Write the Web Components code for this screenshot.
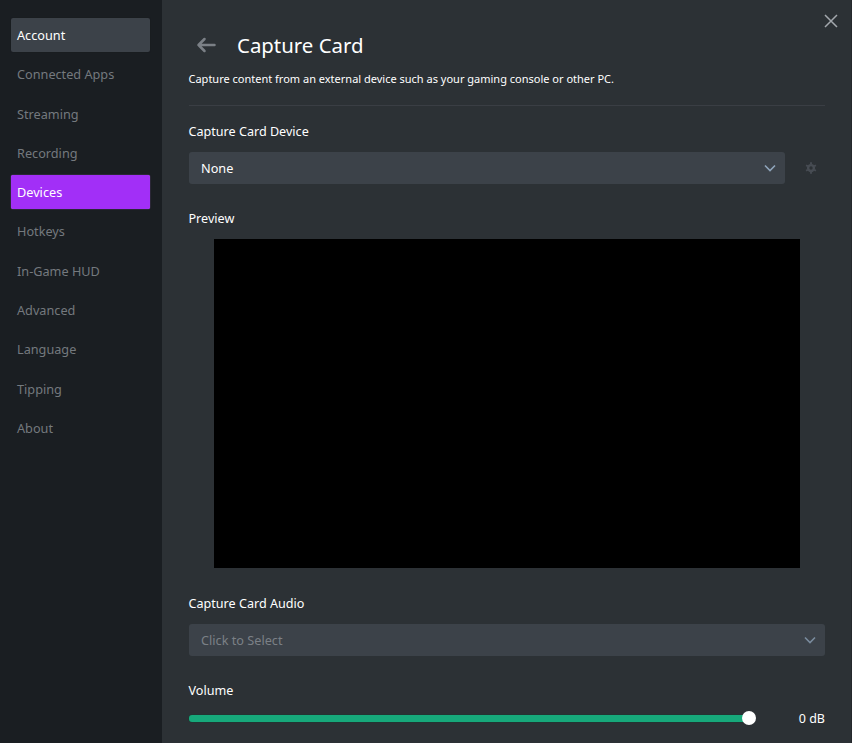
<!DOCTYPE html>
<html>
<head>
<meta charset="utf-8">
<style>
  html, body { margin: 0; height: 100%; background: #2c3135; overflow: hidden; }
  body { font-family: "Noto Sans", "Open Sans", sans-serif; color: #fff; }
</style>
</head>
<body>
<settings-window>
  <nav-item slot="nav" active>Account</nav-item>
  <nav-item slot="nav">Connected Apps</nav-item>
  <nav-item slot="nav">Streaming</nav-item>
  <nav-item slot="nav">Recording</nav-item>
  <nav-item slot="nav" selected>Devices</nav-item>
  <nav-item slot="nav">Hotkeys</nav-item>
  <nav-item slot="nav">In-Game HUD</nav-item>
  <nav-item slot="nav">Advanced</nav-item>
  <nav-item slot="nav">Language</nav-item>
  <nav-item slot="nav">Tipping</nav-item>
  <nav-item slot="nav">About</nav-item>

  <page-header>Capture Card<span slot="desc">Capture content from an external device such as your gaming console or other PC.</span></page-header>

  <field-label style="margin-top:16px">Capture Card Device</field-label>
  <div style="display:flex;align-items:center;margin-top:10px">
    <select-box style="width:596.5px">None</select-box>
    <gear-icon></gear-icon>
  </div>

  <field-label style="margin-top:25px">Preview</field-label>
  <preview-box></preview-box>

  <field-label style="margin-top:26px">Capture Card Audio</field-label>
  <select-box placeholder style="margin-top:10px">Click to Select</select-box>

  <field-label style="margin-top:25px">Volume</field-label>
  <volume-slider value="0 dB"></volume-slider>
</settings-window>

<script>
  class SettingsWindow extends HTMLElement {
    constructor() {
      super();
      this.attachShadow({ mode: 'open' });
      this.shadowRoot.innerHTML = `
        <style>
          :host { display: flex; width: 852px; height: 743px; box-sizing: border-box; border-right: 1px solid #25282c; position: relative; }
          aside { width: 162px; flex: none; box-sizing: border-box; background: #1a1e22; padding: 18px 12px 0 11px; display: flex; flex-direction: column; gap: 5.3px; }
          main { flex: 1; min-width: 0; padding: 0 26px 0 26.5px; }
          .close { position: absolute; top: 14px; right: 13px; width: 14px; height: 14px; }
        </style>
        <aside><slot name="nav"></slot></aside>
        <main><slot></slot></main>
        <svg class="close" viewBox="0 0 14 14" fill="none" stroke="#a3a8ad" stroke-width="1.5"><path d="M1 1L13 13M13 1L1 13"/></svg>
      `;
    }
  }
  customElements.define('settings-window', SettingsWindow);

  class NavItem extends HTMLElement {
    constructor() {
      super();
      this.attachShadow({ mode: 'open' });
      this.shadowRoot.innerHTML = `
        <style>
          :host { display: flex; align-items: center; height: 34px; box-sizing: border-box; padding-left: 6px; border-radius: 2px; font-size: 12.7px; color: #74797e; }
          :host([active]) { background: #3c4249; color: #fff; box-shadow: 0 0 1px #15171a; }
          :host([selected]) { background: #a22ff7; color: #fff; box-shadow: 0 0 1px #c77dff; }
        </style>
        <slot></slot>
      `;
    }
  }
  customElements.define('nav-item', NavItem);

  class PageHeader extends HTMLElement {
    constructor() {
      super();
      this.attachShadow({ mode: 'open' });
      this.shadowRoot.innerHTML = `
        <style>
          :host { display: block; padding-top: 30px; }
          .top { display: flex; align-items: center; height: 30px; font-size: 20.4px; color: #fff; }
          svg { width: 20px; height: 16px; margin: 0 21px 0 7.5px; flex: none; }
          .desc { font-size: 11px; line-height: 16px; margin-top: 11px; color: #fff; }
          hr { height: 1px; border: 0; background: #3a3e44; margin: 18px 0 0 0; }
        </style>
        <div class="top">
          <svg viewBox="0 0 20 16" fill="none" stroke="#7b8086" stroke-width="2.5" stroke-linecap="round" stroke-linejoin="round"><path d="M18.5 8H2.5M8.5 2L2.5 8l6 6"/></svg>
          <slot></slot>
        </div>
        <div class="desc"><slot name="desc"></slot></div>
        <hr>
      `;
    }
  }
  customElements.define('page-header', PageHeader);

  class FieldLabel extends HTMLElement {
    constructor() {
      super();
      this.attachShadow({ mode: 'open' });
      this.shadowRoot.innerHTML = `
        <style>
          :host { display: block; font-size: 12.6px; line-height: 20px; color: #fff; }
        </style>
        <slot></slot>
      `;
    }
  }
  customElements.define('field-label', FieldLabel);

  class SelectBox extends HTMLElement {
    constructor() {
      super();
      this.attachShadow({ mode: 'open' });
      this.shadowRoot.innerHTML = `
        <style>
          :host { display: flex; align-items: center; justify-content: space-between; height: 32px; box-sizing: border-box; padding: 0 9px 0 12.5px; background: #3c4249; border-radius: 3px; font-size: 12.7px; color: #fff; }
          :host([placeholder]) { color: #7b8086; }
          svg { width: 12px; height: 8px; }
          :host([placeholder]) svg { opacity: .75; }
        </style>
        <slot></slot>
        <svg viewBox="0 0 12 8" fill="none" stroke="#8fa4ba" stroke-width="1.6"><path d="M1 1.5l5 5 5-5"/></svg>
      `;
    }
  }
  customElements.define('select-box', SelectBox);

  class GearIcon extends HTMLElement {
    constructor() {
      super();
      this.attachShadow({ mode: 'open' });
      this.shadowRoot.innerHTML = `
        <style>
          :host { display: block; margin-left: 20px; width: 12px; height: 12px; }
          svg { display: block; width: 12px; height: 12px; }
        </style>
        <svg viewBox="0 0 12 12" fill="none" stroke="#474c53">
          <circle cx="6" cy="6" r="2.9" stroke-width="2.4"/>
          <path stroke-width="1.9" d="M6 .3v2M6 9.7v2M1.1 3.2l1.7 1M9.2 7.8l1.7 1M1.1 8.8l1.7-1M9.2 4.2l1.7-1"/>
        </svg>
      `;
    }
  }
  customElements.define('gear-icon', GearIcon);

  class PreviewBox extends HTMLElement {
    constructor() {
      super();
      this.attachShadow({ mode: 'open' });
      this.shadowRoot.innerHTML = `
        <style>
          :host { display: block; width: 586px; height: 329px; margin: 10px 0 0 25.5px; background: #000; }
        </style>
      `;
    }
  }
  customElements.define('preview-box', PreviewBox);

  class VolumeSlider extends HTMLElement {
    constructor() {
      super();
      this.attachShadow({ mode: 'open' });
      this.shadowRoot.innerHTML = `
        <style>
          :host { display: flex; align-items: center; margin-top: 7px; height: 20px; font-size: 12.5px; color: #fff; }
          .track { position: relative; width: 560px; height: 7px; background: #17a97b; border-radius: 3px; box-shadow: 0 0 0 .5px #1a3a33; }
          .thumb { position: absolute; right: -7px; top: -3.5px; width: 14px; height: 14px; border-radius: 50%; background: #fff; }
          .value { margin-left: auto; }
        </style>
        <div class="track"><div class="thumb"></div></div>
        <span class="value"></span>
      `;
      this.shadowRoot.querySelector('.value').textContent = this.getAttribute('value');
    }
  }
  customElements.define('volume-slider', VolumeSlider);
</script>
</body>
</html>
